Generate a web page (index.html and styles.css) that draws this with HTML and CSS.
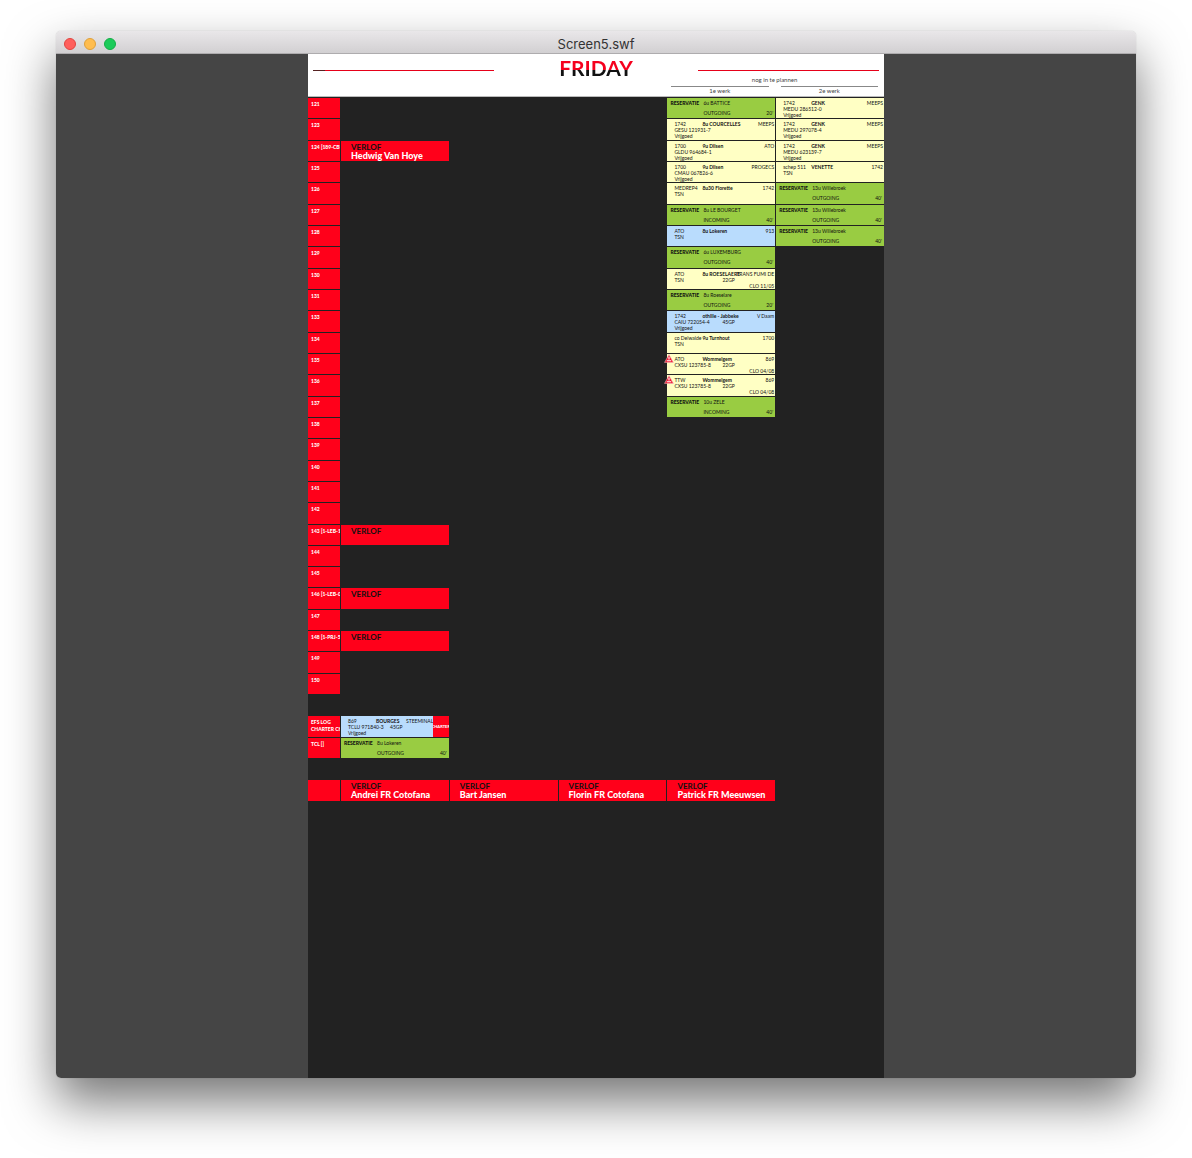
FILE: index.html
```html
<!DOCTYPE html>
<html lang="nl">
<head>
<meta charset="utf-8">
<title>Screen5.swf</title>
<link rel="stylesheet" href="styles.css">
</head>
<body>
<div class="window">
  <header class="titlebar">
    <div class="lights">
      <button class="light close" aria-label="Close"></button>
      <button class="light minimise" aria-label="Minimise"></button>
      <button class="light zoom" aria-label="Zoom"></button>
    </div>
    <span class="filename">Screen5.swf</span>
  </header>
  <main class="desk">
    <div class="stage">
      <header class="day">
        <div class="day-top">
          <span class="rule marked"></span>
          <h1>FRIDAY</h1>
          <span class="rule"></span>
        </div>
        <div class="todo">
          <p>nog in te plannen</p>
          <div class="shifts"><span>1e werk</span><span>2e werk</span></div>
        </div>
      </header>
      <div class="board">
        <section class="column trucks">
          <div class="truck">121</div>
          <div class="truck">123</div>
          <div class="truck">124 [189-CBI</div>
          <div class="truck">125</div>
          <div class="truck">126</div>
          <div class="truck">127</div>
          <div class="truck">128</div>
          <div class="truck">129</div>
          <div class="truck">130</div>
          <div class="truck">131</div>
          <div class="truck">133</div>
          <div class="truck">134</div>
          <div class="truck">135</div>
          <div class="truck">136</div>
          <div class="truck">137</div>
          <div class="truck">138</div>
          <div class="truck">139</div>
          <div class="truck">140</div>
          <div class="truck">141</div>
          <div class="truck">142</div>
          <div class="truck">143 [1-LEB-13</div>
          <div class="truck">144</div>
          <div class="truck">145</div>
          <div class="truck">146 [1-LEB-04</div>
          <div class="truck">147</div>
          <div class="truck">148 [1-PRJ-51</div>
          <div class="truck">149</div>
          <div class="truck">150</div>
          <div class="truck row-30">EFS LOG<br>CHARTER CH</div>
          <div class="truck row-31">TCL []</div>
          <div class="truck row-33"></div>
        </section>
        <section class="column">
          <div class="leave row-3">VERLOF<strong>Hedwig Van Hoye</strong></div>
          <div class="leave row-21">VERLOF</div>
          <div class="leave row-24">VERLOF</div>
          <div class="leave row-26">VERLOF</div>
          <div class="job blue tagged row-30">
            <div class="lines">
              <div class="line"><span class="ref">869</span><b class="place">BOURGES</b><span>STEEMINALS</span></div>
              <div class="line"><span class="unit">TCLU 971840-3</span><span>45GP</span></div>
              <div class="line"><span>Vrijgoed</span></div>
            </div>
            <span class="tag">CHARTER</span>
          </div>
          <div class="booking row-31"><b>RESERVATIE</b><span>8u Lokeren</span><span class="way">OUTGOING</span><span class="size">40'</span></div>
          <div class="leave row-33">VERLOF<strong>Andrei FR Cotofana</strong></div>
        </section>
        <section class="column">
          <div class="leave row-33">VERLOF<strong>Bart Jansen</strong></div>
        </section>
        <section class="column">
          <div class="leave row-33">VERLOF<strong>Florin FR Cotofana</strong></div>
        </section>
        <section class="column">
          <div class="booking"><b>RESERVATIE</b><span>6u BATTICE</span><span class="way">OUTGOING</span><span class="size">20'</span></div>
          <div class="job">
            <div class="line"><span class="ref">1742</span><b class="place">8u COURCELLES</b><span>MEEPS</span></div>
            <div class="line"><span class="unit">GESU 121931-7</span></div>
            <div class="line"><span>Vrijgoed</span></div>
          </div>
          <div class="job">
            <div class="line"><span class="ref">1700</span><b class="place">9u Dilsen</b><span>ATO</span></div>
            <div class="line"><span class="unit">GLDU 964684-1</span></div>
            <div class="line"><span>Vrijgoed</span></div>
          </div>
          <div class="job">
            <div class="line"><span class="ref">1700</span><b class="place">9u Dilsen</b><span>PROGECS</span></div>
            <div class="line"><span class="unit">CMAU 067826-6</span></div>
            <div class="line"><span>Vrijgoed</span></div>
          </div>
          <div class="job">
            <div class="line"><span class="ref">MEDREP4</span><b class="place">8u30 Florette</b><span>1742</span></div>
            <div class="line"><span class="unit">TSN</span></div>
          </div>
          <div class="booking"><b>RESERVATIE</b><span>8u LE BOURGET</span><span class="way">INCOMING</span><span class="size">40'</span></div>
          <div class="job blue">
            <div class="line"><span class="ref">ATO</span><b class="place">8u Lokeren</b><span>913</span></div>
            <div class="line"><span class="unit">TSN</span></div>
          </div>
          <div class="booking"><b>RESERVATIE</b><span>6u LUXEMBURG</span><span class="way">OUTGOING</span><span class="size">40'</span></div>
          <div class="job">
            <div class="line"><span class="ref">ATO</span><b class="place">8u ROESELAERE</b><span>TRANS FUMI DE</span></div>
            <div class="line"><span class="unit">TSN</span><span>22GP</span></div>
            <div class="line deadline">CLO 11/05</div>
          </div>
          <div class="booking"><b>RESERVATIE</b><span>8u Roeselare</span><span class="way">OUTGOING</span><span class="size">20'</span></div>
          <div class="job blue">
            <div class="line"><span class="ref">1742</span><b class="place">othille - Jabbeke</b><span>V Daam</span></div>
            <div class="line"><span class="unit">CAIU 722054-4</span><span>45GP</span></div>
            <div class="line"><span>Vrijgoed</span></div>
          </div>
          <div class="job">
            <div class="line"><span class="ref">co Delwaide</span><b class="place">9u Turnhout</b><span>1700</span></div>
            <div class="line"><span class="unit">TSN</span></div>
          </div>
          <div class="job alert">
            <svg class="warning" viewBox="0 0 18 16" role="img" aria-label="Let op"><path d="M9 1 L17 15 H1 Z" fill="#f0142d" stroke="#f3c9cd" stroke-width="1" stroke-linejoin="round"/><path d="M8 5h2v5H8zM5 11h8v2H5z" fill="#fff"/></svg>
            <div class="line"><span class="ref">ATO</span><b class="place">Wommelgem</b><span>869</span></div>
            <div class="line"><span class="unit">CXSU 123785-8</span><span>22GP</span></div>
            <div class="line deadline">CLO 04/08</div>
          </div>
          <div class="job alert">
            <svg class="warning" viewBox="0 0 18 16" role="img" aria-label="Let op"><path d="M9 1 L17 15 H1 Z" fill="#f0142d" stroke="#f3c9cd" stroke-width="1" stroke-linejoin="round"/><path d="M8 5h2v5H8zM5 11h8v2H5z" fill="#fff"/></svg>
            <div class="line"><span class="ref">TTW</span><b class="place">Wommelgem</b><span>869</span></div>
            <div class="line"><span class="unit">CXSU 123785-8</span><span>22GP</span></div>
            <div class="line deadline">CLO 04/08</div>
          </div>
          <div class="booking"><b>RESERVATIE</b><span>10u ZELE</span><span class="way">INCOMING</span><span class="size">40'</span></div>
          <div class="leave row-33">VERLOF<strong>Patrick FR Meeuwsen</strong></div>
        </section>
        <section class="column">
          <div class="job">
            <div class="line"><span class="ref">1742</span><b class="place">GENK</b><span>MEEPS</span></div>
            <div class="line"><span class="unit">MEDU 286512-0</span></div>
            <div class="line"><span>Vrijgoed</span></div>
          </div>
          <div class="job">
            <div class="line"><span class="ref">1742</span><b class="place">GENK</b><span>MEEPS</span></div>
            <div class="line"><span class="unit">MEDU 297078-4</span></div>
            <div class="line"><span>Vrijgoed</span></div>
          </div>
          <div class="job">
            <div class="line"><span class="ref">1742</span><b class="place">GENK</b><span>MEEPS</span></div>
            <div class="line"><span class="unit">MEDU 623139-7</span></div>
            <div class="line"><span>Vrijgoed</span></div>
          </div>
          <div class="job">
            <div class="line"><span class="ref">schep 511</span><b class="place">VENETTE</b><span>1742</span></div>
            <div class="line"><span class="unit">TSN</span></div>
          </div>
          <div class="booking"><b>RESERVATIE</b><span>13u Willebroek</span><span class="way">OUTGOING</span><span class="size">40'</span></div>
          <div class="booking"><b>RESERVATIE</b><span>13u Willebroek</span><span class="way">OUTGOING</span><span class="size">40'</span></div>
          <div class="booking"><b>RESERVATIE</b><span>13u Willebroek</span><span class="way">OUTGOING</span><span class="size">40'</span></div>
        </section>
      </div>
    </div>
  </main>
</div>
</body>
</html>
```
FILE: styles.css
```css
* { box-sizing: border-box; }

body {
  margin: 0;
  height: 100vh;
  padding: 31px 56px 80px;
  background: #fff;
  font-family: Lato, "Liberation Sans", sans-serif;
  color: #111;
}

.window {
  height: 100%;
  display: flex;
  flex-direction: column;
  border-radius: 5px;
  overflow: hidden;
  box-shadow: 0 0 1px rgba(0, 0, 0, 0.3), 0 24px 50px rgba(0, 0, 0, 0.54);
}

.titlebar {
  flex: none;
  height: 23px;
  display: grid;
  grid-template-columns: 1fr auto 1fr;
  align-items: center;
  padding: 3px 8px 0;
  background: linear-gradient(#e9e7e9, #d2d0d2);
  border-bottom: 1px solid #aeacae;
}

.lights { display: flex; gap: 8px; }

.light {
  width: 12px;
  height: 12px;
  padding: 0;
  border: 1px solid;
  border-radius: 50%;
}

.close { background: #ff5f5c; border-color: #e2443f; }
.minimise { background: #ffbd4f; border-color: #dfa03a; }
.zoom { background: #1ccb5a; border-color: #14ae46; }

.filename {
  font: 13px/18px Inter, sans-serif;
  color: #333;
}

.desk {
  flex: 1;
  min-height: 0;
  display: flex;
  justify-content: center;
  background: #454545;
}

/* Portrait 9:16 display */
.stage {
  height: 100%;
  aspect-ratio: 9 / 16;
  display: flex;
  flex-direction: column;
  background: #222;
}

.day {
  flex: none;
  height: 43px;
  background: #fff;
  border-bottom: 1px solid #bbb;
}

.day-top {
  height: 22px;
  padding: 0 5px;
  display: grid;
  grid-template-columns: 8fr 9fr 8fr;
}

.rule {
  height: 1px;
  margin-top: 16px;
  background: #e60019;
}

.marked { background: linear-gradient(90deg, #522 12px, #e60019 12px); }

h1 {
  margin: 2px 0 0;
  font-size: 21px;
  line-height: 24px;
  font-weight: 700;
  text-align: center;
  color: transparent;
  background: linear-gradient(#f5001d 14px, #111 14px);
  -webkit-background-clip: text;
  background-clip: text;
}

.todo {
  width: 38%;
  margin-left: auto;
  font-size: 6px;
  line-height: 8px;
  text-align: center;
  color: #444;
}

.todo p { margin: 0; height: 10px; }

.shifts {
  display: grid;
  grid-template-columns: 1fr 1fr;
  gap: 12px;
  padding: 0 6px;
}

.shifts span { border-top: 1px solid #888; }

.board {
  flex: 1;
  min-height: 0;
  display: grid;
  grid-template-columns: 32px repeat(5, minmax(0, 1fr));
  column-gap: 1px;
}

.column {
  min-height: 0;
  display: grid;
  grid-template-rows: repeat(46, minmax(0, 1fr));
  row-gap: 1px;
  padding-top: 1px;
}

.row-3 { grid-row: 3; }
.row-21 { grid-row: 21; }
.row-24 { grid-row: 24; }
.row-26 { grid-row: 26; }
.row-30 { grid-row: 30; }
.row-31 { grid-row: 31; }
.row-33 { grid-row: 33; }

.truck,
.leave { background: #ff001a; overflow: hidden; white-space: nowrap; }

.truck {
  padding: 3px 0 0 3px;
  font-size: 5px;
  line-height: 7px;
  font-weight: 900;
  color: #fff;
}

.leave {
  padding: 2px 0 0 10px;
  font-size: 8px;
  line-height: 8px;
  font-weight: 700;
}

.leave strong {
  display: block;
  font-size: 9px;
  line-height: 10px;
  font-weight: 900;
  color: #fff;
}

.job,
.booking {
  font-size: 5px;
  line-height: 6px;
  white-space: nowrap;
}

.job {
  padding: 2px 1px 0 7px;
  background: #ffffc4;
  overflow: hidden;
}

.blue { background: #b9dcfd; }

.line { display: flex; }
.ref { flex: none; width: 28px; }
.place { flex: 1; min-width: 0; font-weight: 700; }
.unit { flex: none; width: 48px; }
.deadline { justify-content: flex-end; }

.tagged { display: flex; padding: 0; }
.tagged .place { min-width: 30px; }
.tagged .unit { width: 42px; }
.lines { flex: 1; min-width: 0; padding: 2px 0 0 7px; overflow: hidden; }

.tag {
  flex: none;
  width: 16px;
  display: flex;
  justify-content: center;
  align-items: center;
  overflow: hidden;
  background: #ff001a;
  color: #fff;
  font-size: 4px;
  font-weight: 900;
}

.booking {
  display: grid;
  grid-template-columns: 33px 1fr auto;
  grid-template-rows: 10px 8px;
  padding: 2px 2px 0 3px;
  background: #99cc42;
}

.booking b { font-weight: 900; }
.way { grid-column: 2; }

.alert { position: relative; overflow: visible; }

.warning {
  position: absolute;
  left: -3px;
  top: 0;
  width: 10px;
  height: 9px;
}
```
